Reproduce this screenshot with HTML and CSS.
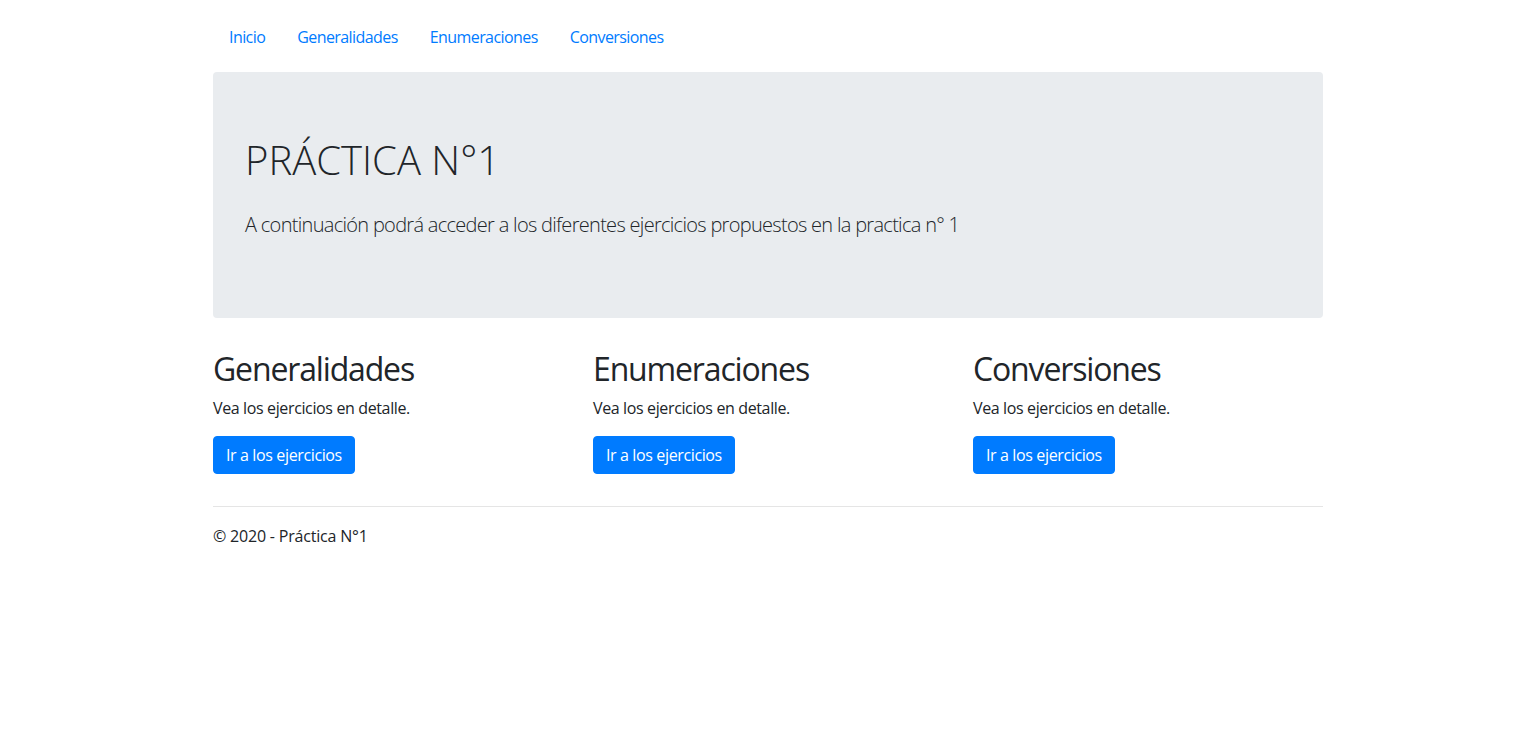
FILE: index.html
```html
<!DOCTYPE html>
<html lang="es">
<head>
<meta charset="utf-8">
<title>Práctica N°1</title>
<link rel="stylesheet" href="styles.css">
</head>
<body>
<div class="container">
  <nav class="nav">
    <a class="nav-link" href="#">Inicio</a>
    <a class="nav-link" href="#">Generalidades</a>
    <a class="nav-link" href="#">Enumeraciones</a>
    <a class="nav-link" href="#">Conversiones</a>
  </nav>
  <div class="jumbotron">
    <h1 class="title">PRÁCTICA N°1</h1>
    <p class="lead">A continuación podrá acceder a los diferentes ejercicios propuestos en la practica n° 1</p>
  </div>
  <div class="row">
    <div class="col">
      <h2 class="col-title">Generalidades</h2>
      <p class="text">Vea los ejercicios en detalle.</p>
      <p class="text"><a class="btn" href="#">Ir a los ejercicios</a></p>
    </div>
    <div class="col">
      <h2 class="col-title">Enumeraciones</h2>
      <p class="text">Vea los ejercicios en detalle.</p>
      <p class="text"><a class="btn" href="#">Ir a los ejercicios</a></p>
    </div>
    <div class="col">
      <h2 class="col-title">Conversiones</h2>
      <p class="text">Vea los ejercicios en detalle.</p>
      <p class="text"><a class="btn" href="#">Ir a los ejercicios</a></p>
    </div>
  </div>
  <hr class="divider">
  <footer class="footer">
    <p class="text foot-text">© 2020 - Práctica N°1</p>
  </footer>
</div>
</body>
</html>
```
FILE: styles.css
```css
* { box-sizing: border-box; }
html, body { margin: 0; padding: 0; background: #fff; }
body {
  font-family: "Open Sans", "Noto Sans", "Liberation Sans", sans-serif;
  font-size: 16px;
  line-height: 1.5;
  color: #212529;
}
.container {
  width: 1110px;
  margin: 0 auto;
}
.nav {
  display: flex;
  padding-top: 17px;
  margin-bottom: 15px;
}
.nav-link {
  display: block;
  padding: 8px 16px;
  color: #007bff;
  text-decoration: none;
  letter-spacing: -0.036em;
}
.jumbotron {
  background: #e9ecef;
  border-radius: 4px;
  padding: 64px 32px;
  margin-bottom: 32px;
}
.title {
  margin: 0 0 26px;
  font-size: 40px;
  font-weight: 300;
  line-height: 1.2;
}
.lead {
  margin: 0 0 14px;
  font-size: 20px;
  font-weight: 300;
  line-height: 1.5;
  letter-spacing: -0.035em;
}
.row {
  display: flex;
  margin: 0 -15px;
}
.col {
  flex: 0 0 380px;
  padding: 0 15px;
}
.col-title {
  margin: 0 0 8px;
  font-size: 32px;
  font-weight: 400;
  line-height: 1.2;
  letter-spacing: -0.036em;
}
.text {
  margin: 0 0 16px;
  letter-spacing: -0.023em;
}
.btn {
  display: inline-block;
  padding: 6px 12px;
  border: 1px solid #007bff;
  border-radius: 4px;
  background: #007bff;
  color: #fff;
  text-decoration: none;
  line-height: 1.5;
  letter-spacing: -0.023em;
}
.divider {
  margin: 16px 0;
  border: 0;
  border-top: 1px solid rgba(0,0,0,.1);
}
.foot-text {
  margin-top: 17px;
  letter-spacing: -0.012em;
}
```
